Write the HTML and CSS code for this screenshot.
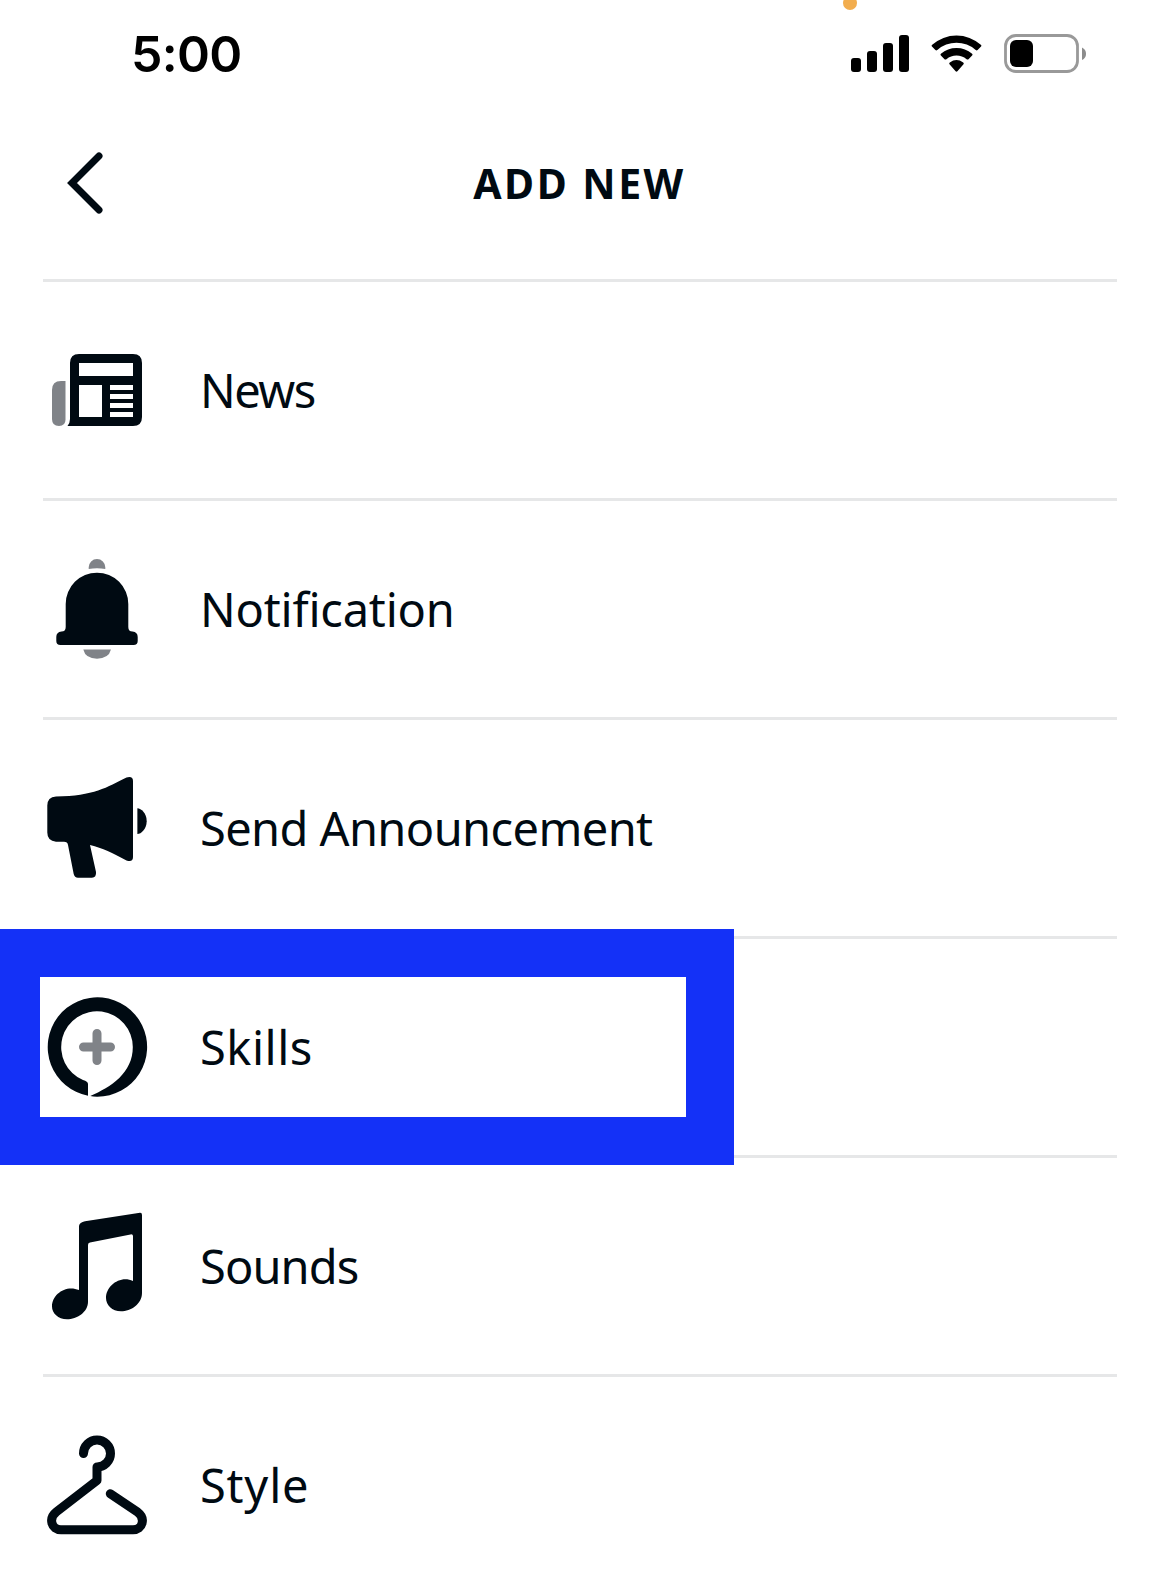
FILE: index.html
```html
<!DOCTYPE html>
<html lang="en">
<head>
<meta charset="utf-8">
<title>Add New</title>
<link rel="stylesheet" href="styles.css">
</head>
<body>
<div class="screen">
  <div class="status">
    <span class="recording-dot"></span>
    <span class="time">5:00</span>
    <div class="indicators">
      <svg class="signal" width="59" height="38" viewBox="0 0 59 38">
        <rect x="0" y="23" width="10" height="14" rx="3"/>
        <rect x="16" y="16" width="10" height="21" rx="3"/>
        <rect x="32" y="8" width="10" height="29" rx="3"/>
        <rect x="48" y="0" width="10" height="37" rx="3"/>
      </svg>
      <svg class="wifi" width="52" height="38" viewBox="0 0 52 38">
        <path d="M1.2 11.8Q0 10.8 1.2 9.8A36.5 36.5 0 0 1 49.8 9.8Q51 10.8 49.8 11.8L46.6 15Q45.7 15.8 44.7 15A29 29 0 0 0 6.3 15Q5.3 15.8 4.4 15Z"/>
        <path d="M9.9 20.6Q8.900 19.700 9.900 18.800A23.500 23.500 0 0 1 41.100 18.800Q42.100 19.700 41.100 20.600L37.500 24.200Q36.600 25 35.600 24.200A16 16 0 0 0 15.400 24.200Q14.400 25 13.500 24.200Z"/>
        <path d="M18.500 29.200Q17.700 28.200 18.800 27.500A11.500 11.500 0 0 1 32.200 27.500Q33.300 28.200 32.500 29.200L26.400 36.300Q25.500 37.200 24.600 36.300Z"/>
      </svg>
      <svg class="battery" width="84" height="40" viewBox="0 0 84 40">
        <rect x="1.5" y="1.5" width="72" height="36" rx="10.5" fill="none" stroke="#999" stroke-width="2.8"/>
        <rect x="6" y="6" width="23" height="27" rx="6"/>
        <path d="M78 13.500Q82 15.500 82 19.700Q82 24 78 26Z" fill="#8c8c8c"/>
      </svg>
    </div>
  </div>

  <header class="header">
    <svg class="back" width="40" height="64" viewBox="0 0 40 64"><path d="M34 5 7 32 34 59"/></svg>
    <h1 class="title">ADD NEW</h1>
  </header>

  <ul class="list">
    <li class="row">
      <svg class="icon" viewBox="0 0 108 108">
        <path class="soft" d="M22.500 45V83.500Q22.500 90 16 90Q9 90 9 83V54Q9 45 18 45Z"/>
        <path fill-rule="evenodd" d="M36 18H90Q99 18 99 27V81Q99 90 90 90H24.500Q27 87 27 83V27Q27 18 36 18ZM36 27V40H90V27ZM36 49V81H59V49ZM67 49V54H90V49ZM67 58V63H90V58ZM67 67V72H90V67ZM67 76V81H90V76Z"/>
      </svg>
      <span class="label news">News</span>
    </li>
    <li class="row">
      <svg class="icon" viewBox="0 0 108 108">
        <path class="soft" d="M45.700 14V12.300A8.300 8.300 0 0 1 62.300 12.300V14Q54 12.500 45.700 14Z"/>
        <path d="M22.700 49A31.300 31.300 0 0 1 85.300 49V72Q85.300 76.500 89.500 76.500Q94.700 77 94.700 82V86Q94.700 90 90.500 90H17.500Q13.300 90 13.300 86V82Q13.300 77 18.500 76.500Q22.700 76.500 22.700 72Z"/>
        <path class="soft" d="M40.300 94.500H68Q65.500 103.700 54 103.700Q42.500 103.700 40.300 94.500Z"/>
      </svg>
      <span class="label notification">Notification</span>
    </li>
    <li class="row">
      <svg class="icon" viewBox="0 0 108 108">
        <path d="M13 22.400C51 22 64 13 83.500 3.400Q90 1.500 90 7V83Q90 88.500 83.500 86.400C69 79 60 74 47 71L53 98Q53.500 103.700 49 103.700H35Q31.500 103.700 30.700 100L25 71Q24.500 67.700 21 67.700H13Q4.300 67 4.300 58.500V31.500Q4.300 23 13 22.400Z"/>
        <path d="M94.400 34.300C98 34.500 103.700 39 103.700 47.200C103.700 55 98 60 94.400 60Z"/>
      </svg>
      <span class="label announcement">Send Announcement</span>
    </li>
    <li class="row highlighted">
      <svg class="icon" viewBox="0 0 108 108">
        <path d="M45 102.800A49.700 49.700 0 1 1 54 103.700Q50 103.700 47.300 103C68 94 89.800 80 89.800 54A35.800 35.800 0 1 0 40 87Q45 88.500 45 91Z"/>
        <path class="plus" d="M54 40.500V67.500M40.500 54H67.500"/>
      </svg>
      <span class="label skills">Skills</span>
    </li>
    <li class="row">
      <svg class="icon" viewBox="0 0 108 108">
        <path d="M36 14Q36.500 10.500 42 9.300L97 .7Q99 .5 99 3V81C99 92 88 99.300 78 99.300C69 99.300 63 93 63 86C63 74 77 63 90 69V24Q90 22 87.500 22.400L47 30.400Q45 30.800 45 33V90C45 100 34 107.300 24 107.300C15 107.300 9 101 9 94.500C9 82 23 72.500 36 78Z"/>
      </svg>
      <span class="label sounds">Sounds</span>
    </li>
    <li class="row">
      <svg class="icon" viewBox="0 0 108 108">
        <path class="outline" d="M40.500 22.500A13.500 13.500 0 1 1 54 36V49.500L13.500 80.700C5 87.500 8.500 98.800 18 98.800H90C99.500 98.800 103 87.500 94.500 81L67.300 62.700"/>
      </svg>
      <span class="label style">Style</span>
    </li>
  </ul>
</div>
</body>
</html>
```
FILE: styles.css
```css
*, *::after { box-sizing: border-box; }

body {
  margin: 0;
  background: #fff;
  color: #000a12;
  font-family: "Noto Sans", sans-serif;
}

.screen {
  width: 1150px;
  height: 1570px;
  overflow: hidden;
}

.status {
  position: relative;
  display: flex;
  justify-content: space-between;
  height: 108px;
  padding: 34px 62px 0 131px;
  color: #000;
}

.recording-dot {
  position: absolute;
  left: 843px;
  top: -4px;
  width: 14px;
  height: 14px;
  border-radius: 50%;
  background: #f2ad4e;
}

.time {
  font: 600 50px/40px Inter, sans-serif;
  letter-spacing: -0.7px;
}

.indicators {
  display: flex;
  align-items: flex-start;
  gap: 21px;
}

.signal, .wifi { margin-top: 1px; }

.header {
  display: grid;
  grid-template-columns: 40px 1fr 40px;
  align-items: center;
  height: 171px;
  padding: 0 63px 21px 65px;
}

.back path {
  fill: none;
  stroke: #000a12;
  stroke-width: 7;
  stroke-linecap: round;
  stroke-linejoin: miter;
}

.title {
  margin: 0 0 0 7px;
  font-size: 41px;
  font-weight: 700;
  line-height: 56px;
  letter-spacing: 2.5px;
  text-align: center;
}

.list {
  margin: 0;
  padding: 0 33px 0 43px;
  list-style: none;
}

.row {
  position: relative;
  display: flex;
  align-items: center;
  gap: 49px;
  height: 219px;
  border-top: 3px solid #e6e7e8;
}

.icon {
  width: 108px;
  height: 108px;
  fill: #000a12;
}

.icon .soft { fill: #808388; }

.icon .plus {
  fill: none;
  stroke: #808388;
  stroke-width: 9;
  stroke-linecap: round;
}

.icon .outline {
  fill: none;
  stroke: #000a12;
  stroke-width: 9;
  stroke-linecap: round;
  stroke-linejoin: round;
}

.label {
  font-size: 47px;
  line-height: 64px;
  white-space: nowrap;
}

.news { letter-spacing: -1.5px; }
.notification { letter-spacing: -0.2px; }
.announcement { letter-spacing: -0.6px; }
.skills { letter-spacing: 0.5px; }
.sounds { letter-spacing: -0.9px; }
.style { letter-spacing: 0.8px; }

/* Thick frame calling out one row; it covers the dividers around it. */
.highlighted::after {
  content: "";
  position: absolute;
  z-index: 1;
  left: -43px;
  top: -10px;
  width: 734px;
  height: 236px;
  border: 48px solid #1431f7;
  border-left-width: 40px;
}
```
